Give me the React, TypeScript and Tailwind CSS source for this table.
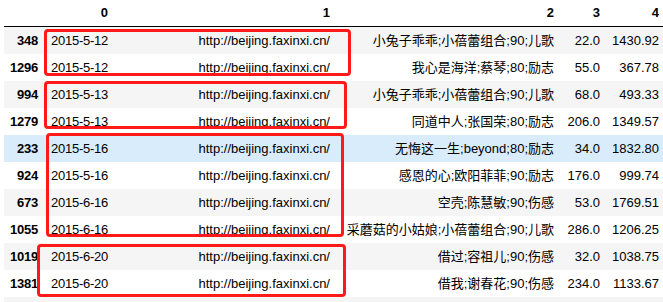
import React from "react";

const rows: { idx: string; d: string; s: string; a: string; b: string; hover?: boolean }[] = [
  { idx: "348", d: "2015-5-12", s: "小兔子乖乖;小蓓蕾组合;90;儿歌", a: "22.0", b: "1430.92" },
  { idx: "1296", d: "2015-5-12", s: "我心是海洋;蔡琴;80;励志", a: "55.0", b: "367.78" },
  { idx: "994", d: "2015-5-13", s: "小兔子乖乖;小蓓蕾组合;90;儿歌", a: "68.0", b: "493.33" },
  { idx: "1279", d: "2015-5-13", s: "同道中人;张国荣;80;励志", a: "206.0", b: "1349.57" },
  { idx: "233", d: "2015-5-16", s: "无悔这一生;beyond;80;励志", a: "34.0", b: "1832.80", hover: true },
  { idx: "924", d: "2015-5-16", s: "感恩的心;欧阳菲菲;90;励志", a: "176.0", b: "999.74" },
  { idx: "673", d: "2015-6-16", s: "空壳;陈慧敏;90;伤感", a: "53.0", b: "1769.51" },
  { idx: "1055", d: "2015-6-16", s: "采蘑菇的小姑娘;小蓓蕾组合;90;儿歌", a: "286.0", b: "1206.25" },
  { idx: "1019", d: "2015-6-20", s: "借过;容祖儿;90;伤感", a: "32.0", b: "1038.75" },
  { idx: "1381", d: "2015-6-20", s: "借我;谢春花;90;伤感", a: "234.0", b: "1133.67" },
];

const grid = "grid grid-cols-[39px_70px_222px_224px_46px_58px]";
const cell = "text-right pr-[5px] whitespace-nowrap";
const last = "text-right pr-[4px] whitespace-nowrap";

export default function App() {
  return (
    <div
      className="relative w-[663px] h-[302px] overflow-hidden bg-white text-[13px] text-black"
      style={{ fontFamily: '"Liberation Sans", Arial, "Noto Sans CJK SC", sans-serif' }}
    >
      <div className="ml-[4px] w-[659px]">
        <div className={`${grid} h-[27px] items-center border-b border-black font-bold`}>
          <div className={cell}></div>
          <div className={cell}>0</div>
          <div className={cell}>1</div>
          <div className={cell}>2</div>
          <div className={cell}>3</div>
          <div className={last}>4</div>
        </div>
        {rows.map((r, i) => (
          <div
            key={r.idx}
            className={`${grid} h-[27px] items-center ${
              r.hover ? "bg-[#d9ecfc]" : i % 2 === 0 ? "bg-[#f5f5f5]" : "bg-white"
            }`}
          >
            <div className={`${cell} font-bold tracking-[-0.2px]`}>{r.idx}</div>
            <div className={`${cell} tracking-[-0.25px]`}>{r.d}</div>
            <div className={cell}>http://beijing.faxinxi.cn/</div>
            <div className={cell}>{r.s}</div>
            <div className={cell}>{r.a}</div>
            <div className={last}>{r.b}</div>
          </div>
        ))}
        <div className={`${grid} h-[27px] bg-[#f5f5f5]`}></div>
      </div>

      <div className="absolute left-[44px] top-[29px] w-[307px] h-[47px] border-[3px] border-[#ff1a1a] rounded-[4px]" />
      <div className="absolute left-[44px] top-[81px] w-[303px] h-[48px] border-[3px] border-[#ff1a1a] rounded-[4px]" />
      <div className="absolute left-[46px] top-[133px] w-[298px] h-[104px] border-[3px] border-[#ff1a1a] rounded-[4px]" />
      <div className="absolute left-[37px] top-[244px] w-[309px] h-[53px] border-[3px] border-[#ff1a1a] rounded-[4px]" />
    </div>
  );
}
